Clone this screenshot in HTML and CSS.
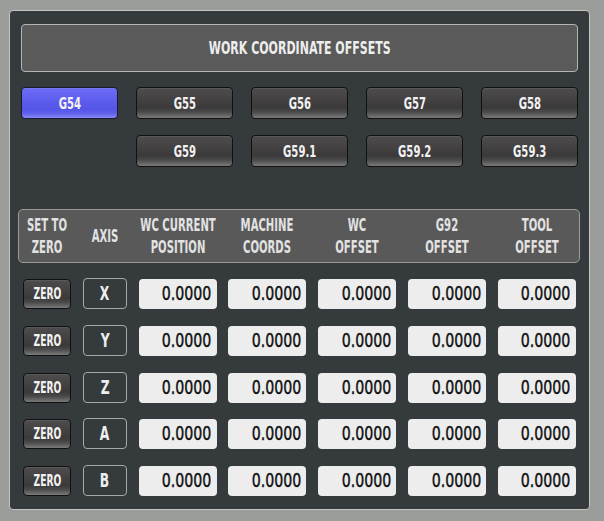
FILE: index.html
```html
<!doctype html>
<html>
<head>
    <meta charset="utf-8">
    <title>Work Coordinate Offsets</title>
    <link rel="stylesheet" href="styles.css">
</head>
<body>

<div class="panel">

    <div class="title"><span>WORK COORDINATE OFFSETS</span></div>

    <div class="wcs">
        <button class="btn active"><span>G54</span></button>
        <button class="btn"><span>G55</span></button>
        <button class="btn"><span>G56</span></button>
        <button class="btn"><span>G57</span></button>
        <button class="btn"><span>G58</span></button>
        <i></i>
        <button class="btn"><span>G59</span></button>
        <button class="btn"><span>G59.1</span></button>
        <button class="btn"><span>G59.2</span></button>
        <button class="btn"><span>G59.3</span></button>
    </div>

    <div class="head grid">
        <div>SET TO<br>ZERO</div>
        <div>AXIS</div>
        <div>WC CURRENT<br>POSITION</div>
        <div>MACHINE<br>COORDS</div>
        <div>WC<br>OFFSET</div>
        <div>G92<br>OFFSET</div>
        <div>TOOL<br>OFFSET</div>
    </div>

    <div class="rows grid">
        <button class="zero"><span>ZERO</span></button>
        <div class="axis"><span>X</span></div>
        <div class="val"><span>0.0000</span></div>
        <div class="val"><span>0.0000</span></div>
        <div class="val"><span>0.0000</span></div>
        <div class="val"><span>0.0000</span></div>
        <div class="val"><span>0.0000</span></div>

        <button class="zero"><span>ZERO</span></button>
        <div class="axis"><span>Y</span></div>
        <div class="val"><span>0.0000</span></div>
        <div class="val"><span>0.0000</span></div>
        <div class="val"><span>0.0000</span></div>
        <div class="val"><span>0.0000</span></div>
        <div class="val"><span>0.0000</span></div>

        <button class="zero"><span>ZERO</span></button>
        <div class="axis"><span>Z</span></div>
        <div class="val"><span>0.0000</span></div>
        <div class="val"><span>0.0000</span></div>
        <div class="val"><span>0.0000</span></div>
        <div class="val"><span>0.0000</span></div>
        <div class="val"><span>0.0000</span></div>

        <button class="zero"><span>ZERO</span></button>
        <div class="axis"><span>A</span></div>
        <div class="val"><span>0.0000</span></div>
        <div class="val"><span>0.0000</span></div>
        <div class="val"><span>0.0000</span></div>
        <div class="val"><span>0.0000</span></div>
        <div class="val"><span>0.0000</span></div>

        <button class="zero"><span>ZERO</span></button>
        <div class="axis"><span>B</span></div>
        <div class="val"><span>0.0000</span></div>
        <div class="val"><span>0.0000</span></div>
        <div class="val"><span>0.0000</span></div>
        <div class="val"><span>0.0000</span></div>
        <div class="val"><span>0.0000</span></div>
    </div>

</div>

</body>
</html>
```

FILE: styles.css
```css
* {
    box-sizing: border-box;
}

body {
    margin: 0;
    background: #9b9d9b;
    font-family: "DejaVu Sans Condensed", "DejaVu Sans", sans-serif;
    font-stretch: condensed;
}

/* the labels use a tall narrow face, so squeeze them */
.title span, .btn span, .zero span, .axis span, .val span {
    display: inline-block;
}

.panel {
    margin: 10px 0 0 9px;
    width: 581px;
    height: 500px;
    padding: 13px 11px;
    background: #353a3c;
    border: 1px solid #c4c6c4;
    border-radius: 4px;
}

.title {
    height: 48px;
    line-height: 46px;
    text-align: center;
    color: #eee;
    font-size: 18px;
    font-weight: bold;
    background: #5a5a5a;
    border: 1px solid #b4b4b4;
    border-radius: 4px;
}

.title span {
    transform: scaleX(0.68);
}

.wcs {
    display: grid;
    grid-template-columns: repeat(5, 97px);
    column-gap: 18px;
    row-gap: 16px;
    margin-top: 15px;
}

.btn, .zero {
    height: 32px;
    padding: 0;
    color: #f2f2f2;
    font-family: inherit;
    font-size: 16px;
    font-weight: bold;
    border: 1px solid #111;
    border-radius: 4px;
    background: linear-gradient(#4e4c4c, #3b3939 65%, #4a4a4a 80%, #7a7a7a);
    box-shadow: inset 0 1px 0 rgba(255,255,255,0.08);
}

.btn span {
    transform: scaleX(0.7);
}

.btn.active {
    background: linear-gradient(#6c6cf6, #5454e6 70%, #6262ee 85%, #8a8af8);
    border-color: #1a1a30;
}

.grid {
    display: grid;
    grid-template-columns: 48px 44px repeat(5, 78px);
    column-gap: 11.8px;
}

.head {
    margin: 42px -2px 0 -3px;
    height: 54px;
    padding: 0 4px;
    align-items: center;
    background: #595959;
    border: 1px solid #9c9c9c;
    border-radius: 5px;
}

.head div {
    text-align: center;
    white-space: nowrap;
    color: #e2e2e2;
    font-size: 17px;
    font-weight: bold;
    line-height: 22px;
    margin: 0 -30px;
    transform: scaleX(0.66);
}

.rows {
    margin: 16px 0 0 2px;
    row-gap: 16.75px;
    grid-auto-rows: 30px;
}

.zero {
    height: 30px;
    font-size: 15px;
}

.zero span {
    transform: scaleX(0.68);
}

.axis {
    height: 31px;
    margin-top: -1px;
    text-align: center;
    line-height: 29px;
    color: #eee;
    font-size: 19px;
    font-weight: bold;
    border: 1px solid #a8a8a8;
    border-radius: 4px;
}

.axis span {
    transform: scaleX(0.72);
}

.val {
    text-align: right;
    padding-right: 5px;
    line-height: 30px;
    color: #111;
    font-size: 19.5px;
    -webkit-text-stroke: 0.4px #111;
    background: #ededed;
    border-radius: 4px;
}

.val span {
    transform: scaleX(0.81);
    transform-origin: right center;
}
```
